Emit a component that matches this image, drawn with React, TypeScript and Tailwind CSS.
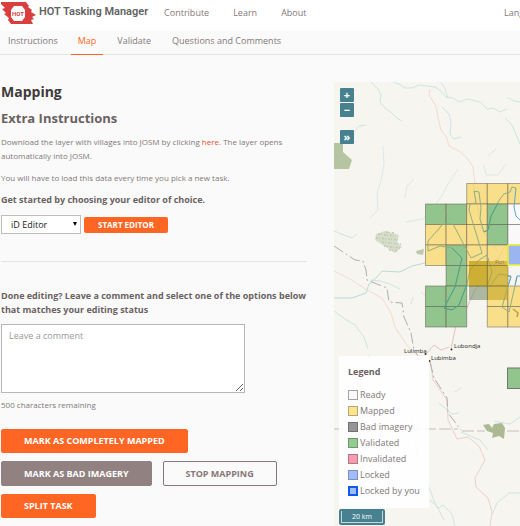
import React from "react";

type Status = "ready" | "mapped" | "validated" | "locked";

const fills: Record<Status, string> = {
  ready: "#f9f9f9",
  mapped: "#fadf8b",
  validated: "#92c48e",
  locked: "#9bb5f2",
};

const cells: [number, number, Status][] = [
  [2, 0, "mapped"], [3, 0, "mapped"], [4, 0, "mapped"],
  [0, 1, "validated"], [1, 1, "validated"], [2, 1, "mapped"], [3, 1, "validated"], [4, 1, "ready"],
  [0, 2, "mapped"], [1, 2, "mapped"], [2, 2, "mapped"], [3, 2, "validated"], [4, 2, "ready"],
  [0, 3, "mapped"], [1, 3, "validated"], [2, 3, "mapped"], [3, 3, "mapped"],
  [1, 4, "validated"], [2, 4, "mapped"], [3, 4, "mapped"],
  [0, 5, "validated"], [1, 5, "validated"], [3, 5, "mapped"], [4, 5, "mapped"],
  [0, 6, "validated"], [1, 6, "validated"], [3, 6, "mapped"], [4, 6, "mapped"],
];

const legend: [string, string][] = [
  ["Ready", "border border-[#a3a3a3] bg-[#f9f9f9]"],
  ["Mapped", "border border-[#b5a577] bg-[#ffe38e]"],
  ["Bad imagery", "border border-[#727272] bg-[#969696]"],
  ["Validated", "border border-[#71966f] bg-[#92cc90]"],
  ["Invalidated", "border border-[#b17585] bg-[#f99bb0]"],
  ["Locked", "border border-[#7d8fbd] bg-[#9fbcfb]"],
  ["Locked by you", "border-2 border-[#1158f0] bg-[#9fbcfb]"],
];

function Logo() {
  return (
    <svg viewBox="0 0 36 24" className="h-6 w-9 shrink-0" aria-hidden="true">
      <path d="M1 1 H26 L29 5 L28 6 L32 9 L31 11 L36 14 L32 16 L34 18 L31 19 L33 23 H11 L8 19 L9 17 L4 13 L6 12 L2 8 L5 7 L1 3Z" fill="#d93f3e" />
      <path d="M14 5 H22 L25 9 V16 L22 20 H14 L11 16 V9Z" fill="#fff" />
      <text x="18" y="15" textAnchor="middle" fontSize="6" fontWeight="700" fill="#d93f3e" fontFamily="Roboto, sans-serif">HOT</text>
    </svg>
  );
}

function TaskMap() {
  return (
    <svg viewBox="334 82 186 444" preserveAspectRatio="xMinYMin slice" className="absolute inset-0 h-full w-full" role="img" aria-label="Task map" fill="none">
      <rect x="334" y="82" width="186" height="444" fill="#f6f5f0" />
      <g stroke="#c9e2e0" strokeWidth="0.9">
        <path d="M371 82 L378 89 L381 95 L380 102 L385 108 L392 113 L397 118 L402 121" />
        <path d="M393 82 L399 84 L405 88 L412 88 L419 85 L427 86 L435 87 L441 91 L446 97 L453 98 L459 102 L468 99 L480 102 L487 109 L493 108 L500 112 L507 109" />
        <path d="M441 82 L445 89 L448 98 M442 107 L449 114 L451 123 L450 134 L454 139 L461 137" />
        <path d="M505 118 L512 125 L515 132 L520 144 M507 97 L514 101 L520 102" />
        <path d="M355 131 L359 126 L366 125" />
        <path d="M383 146 L384 164 L381 181 L377 193 L378 210 L370 218 M458 169 L448 184 L440 199 L431 208 L423 219 L406 222" opacity=".7" />
        <path d="M414 179 L407 186 L405 198 M496 149 L488 156 M484 165 L486 175 L498 175 L506 164" opacity=".7" />
        <path d="M334 231 L344 235 L352 238 L357 234" />
        <path d="M334 298 L352 298 L366 293 L369 284 L377 277 L382 271 L400 272 L412 266 L425 263" stroke="#afd8d5" />
        <path d="M370 280 L380 281 L390 284 L400 289 M334 311 L345 319 L355 325 L364 337 L368 349" />
        <path d="M377 373 L384 377 M368 355 L379 377 L397 396 L410 414 L414 433 L418 459 L429 487 L435 503 L444 520" />
        <path d="M439 403 L452 414 L459 413 M461 432 L480 440 L488 450 M520 493 L509 493 L497 503 L492 515" />
        <path d="M430 500 L439 508 L443 505 L452 514 L455 526 M455 392 L461 388 M494 421 L510 424 L520 417" />
      </g>
      <g stroke="#f2dccf" strokeWidth="1">
        <path d="M430 89 L429 95 L436 106 L438 118 L441 130 L447 138 L449 146 L459 151 L467 158 L473 167 L475 184 L480 210 L482 235 L498 258 L496 268" />
        <path d="M334 271 L350 279 L367 290 L382 298 L391 313 L395 327 L404 341 L413 354" />
        <path d="M431 364 L433 380 L447 400 L448 420 L457 439 L468 437 L479 446 L485 460 L475 478 L476 487 L488 498 L492 512 L490 526" stroke="#edd0ca" />
        <path d="M426 354 L434 345 L441 350 L449 347 M451 349 L456 325 L466 310 L475 290 L494 268" stroke="#eabfba" />
        <path d="M413 297 L411 304 M421 292 L426 296" />
      </g>
      <path d="M334 143 H343 V152 L352 160 L349 169 H334Z" fill="#b5c5a1" />
      <path d="M376 234 L385 231 L399 235 L397 242 L402 247 L395 253 L389 249 L381 244 L375 240Z" fill="#d8ddcb" />
      <path d="M378 234 L396 236 M376 238 L399 240 M382 242 L401 244 M384 246 L400 248 M389 250 L398 251 M386 232 L394 233" stroke="#c0cbae" strokeWidth="1.5" strokeDasharray="2 1 1 2" />
      <path d="M416 251 L424 249 L423 255 L417 254Z" fill="#bdc9aa" />
      <path d="M483 425 L489 424 L492 428 L494 424 L502 423 L505 428 L504 439 L499 436 L492 438 L493 433 L487 431Z" fill="#acba93" />
      <path d="M334 246 L355 260 L363 261 L366 270 L367 280 L387 288 L389 302 L402 303 L404 317 L411 333 L414 350 L418 356 M430 362 L434 378 L447 398 L448 413 L461 430" stroke="#b2adb1" strokeWidth="1" strokeDasharray="11 3 2 3" />
      <path d="M334 429 H458 M462 431 H485 M507 431 H520" stroke="#c8bdbb" strokeWidth="1" strokeDasharray="12 3" />

      <g>
        {cells.map(([column, row, status]) => (
          <rect key={`${column}-${row}`} x={425.5 + column * 20.6} y={183.5 + row * 20.5} width="20.6" height="20.5" fill={fills[status]} stroke="#4d4a40" strokeOpacity=".45" strokeWidth="1" />
        ))}
        <rect x="507.5" y="368" width="21" height="20.5" fill={fills.validated} stroke="#6b7969" />
      </g>
      <path d="M473 183 L477 204 L482 230 L498 252 M449 204 L437 235 M494 268 L505 245" stroke="#e6ad72" strokeWidth="1" opacity=".3" />
      <g stroke="#8fae80" strokeWidth="1">
        <path d="M474 191 L479 192 L481 208 L480 219 L484 232 L488 230 L491 216 L500 199 L504 194 L510 192 L512 187 L516 188" />
        <path d="M474 191 L476 203 L470 204 L469 210 L482 253 L471 258 L453 224 L443 224 L428 241 L428 251 L440 246 L452 248 L462 258 L455 287 L444 308 L452 310 L459 305 L467 284 L470 270 L479 260 L487 255 L492 272 L487 287 L490 286 L499 274 L511 276 L502 307 L509 312 L517 277" />
      </g>
      <path d="M484 232 L488 230 L491 216 L498 203 M452 248 L462 258 L455 287 L444 308 L452 310 L459 305 L467 284" stroke="#46a188" strokeWidth="1" />
      <path d="M516 188 L514 207 L516 216 L520 220 M507 276 L511 277 L508 286 M515 285 L517 276 H520" stroke="#5ba5cf" strokeWidth="1" />
      <path d="M469 261 H487.5 V286 H469Z" fill="#b99a12" opacity=".7" />
      <path d="M487.5 261 H508 V300 H487.5Z" fill="#bfa325" opacity=".6" />
      <path d="M469 286 H487.5 V300 H469Z" fill="#6f8560" opacity=".55" />
      <path d="M469 265.5 H508 M487.5 261 V300 M469 286 H508" stroke="#837638" opacity=".7" />
      <text x="495" y="264" fill="#9c8240" fontSize="6" fontFamily="Open Sans, sans-serif">Fizi</text>
      <path d="M513 309 L518 313 L517 317" stroke="#bca042" strokeWidth="1.5" />
      <rect x="508" y="245" width="21" height="20" fill={fills.locked} stroke="#edf428" strokeWidth="1.5" />

      <g fill="#333" fontFamily="Noto Sans, sans-serif" fontSize="6">
        <text x="404" y="353">Lulimba</text>
        <text x="431" y="360">Lubimba</text>
        <text x="454" y="348">Lubondja</text>
        <circle cx="425.5" cy="354" r="1" />
        <circle cx="429.5" cy="361" r="1" />
        <circle cx="451.5" cy="349.5" r="1" />
      </g>
    </svg>
  );
}

function Action({ children, tone = "orange" }: { children: React.ReactNode; tone?: "orange" | "gray" | "outline" }) {
  const tones = {
    orange: "h-6 border-[#ff6624] bg-[#ff6624] text-white",
    gray: "h-[25px] border-[#918181] bg-[#918181] text-white",
    outline: "h-[25px] border-[#877777] bg-[#fafafa] text-[#877777]",
  };
  return <button className={`rounded-[2px] border px-[22px] text-[9px] leading-5 font-bold ${tones[tone]}`}>{children}</button>;
}

const mapButton = "flex h-[14px] w-[14px] items-center justify-center rounded-[1px] bg-[#478190] text-[11px] leading-3 font-bold text-white";

export default function App() {
  return (
    <div className="flex min-h-screen flex-col overflow-hidden bg-[#fafafa] font-['Open_Sans',sans-serif] text-[#6a6262]">
      <header className="flex h-[31px] items-start bg-white">
        <a href="#home" className="flex h-[25px] shrink-0 items-center gap-[3px] font-['Roboto',sans-serif] text-[11px] font-semibold text-[#626262]">
          <Logo />
          <span className="whitespace-nowrap">HOT Tasking Manager</span>
        </a>
        <nav className="ml-4 flex h-[25px] flex-1 items-center gap-6 text-[9px] text-[#827979]">
          <a href="#contribute">Contribute</a>
          <a href="#learn">Learn</a>
          <a href="#about">About</a>
        </nav>
        <button className="h-[25px] w-4 shrink-0 overflow-hidden text-left text-[9px] whitespace-nowrap text-[#827979]">Language</button>
      </header>
      <nav className="flex h-6 border-b border-[#e3e3e3] pl-2 text-[9px] leading-5 text-[#827979]">
        <a href="#instructions">Instructions</a>
        <a href="#map" className="ml-[13px] h-6 border-b border-[#ff6624] px-[7px] text-[#ff6624]">Map</a>
        <a href="#validate" className="ml-[14px]">Validate</a>
        <a href="#questions" className="ml-[21px]">Questions and Comments</a>
      </nav>

      <main className="flex flex-1 gap-[27px] pt-[27px]">
        <section className="w-[307px] shrink-0 pl-px">
          <h1 className="text-[14px] leading-5 font-bold text-[#403b3b]">Mapping</h1>
          <h2 className="mt-[6px] text-[13px] leading-5 font-bold">Extra Instructions</h2>
          <p className="mt-[7px] text-[8px] leading-[14px] text-[#827979]">
            Download the layer with villages into JOSM by clicking <a href="#layer" className="text-[#f04a2c]">here</a>. The layer opens automatically into JOSM.
          </p>
          <p className="mt-2 text-[8px] leading-[14px] text-[#827979]">You will have to load this data every time you pick a new task.</p>
          <h3 className="mt-2 text-[9px] leading-[14px] font-bold"><label htmlFor="editor">Get started by choosing your editor of choice.</label></h3>
          <div className="mt-2 flex items-center gap-[3px]">
            <div className="relative">
              <select id="editor" className="block h-[19px] w-20 appearance-none border border-[#c2bdbd] bg-white pl-[9px] text-[9px] leading-4 text-[#222]">
                <option>iD Editor</option>
                <option>JOSM</option>
              </select>
              <span className="pointer-events-none absolute top-[7px] right-1 border-x-[2px] border-t-[4px] border-x-transparent border-t-black" />
            </div>
            <button className="h-4 w-[84px] rounded-[2px] bg-[#ff6624] text-[8px] leading-4 font-bold text-white">START EDITOR</button>
          </div>
          <hr className="mt-[27px] border-[#e3e3e3]" />
          <h3 className="mt-[27px] text-[9px] leading-[14px] font-bold"><label htmlFor="comment">Done editing? Leave a comment and select one of the options below that matches your editing status</label></h3>
          <textarea id="comment" placeholder="Leave a comment" className="mt-[7px] block h-[69px] w-[244px] resize border border-[#bcb5b5] bg-white px-[7px] py-1 text-[9px] leading-[14px] placeholder:text-[#999]" />
          <p className="mt-[5px] text-[8px] leading-[14px] text-[#827979]">500 characters remaining</p>
          <div className="mt-[17px] flex flex-col items-start gap-2">
            <Action>MARK AS COMPLETELY MAPPED</Action>
            <div className="flex gap-[11px]">
              <Action tone="gray">MARK AS BAD IMAGERY</Action>
              <Action tone="outline">STOP MAPPING</Action>
            </div>
            <Action>SPLIT TASK</Action>
          </div>
        </section>

        <section className="relative min-w-0 flex-1 overflow-hidden" aria-label="Map">
          <TaskMap />
          <div className="absolute top-[6px] left-[6px] flex flex-col gap-px">
            <button className={mapButton} aria-label="Zoom in">+</button>
            <button className={mapButton} aria-label="Zoom out">−</button>
            <button className={`mt-3 ${mapButton}`} aria-label="Show layers">»</button>
          </div>
          <aside className="absolute bottom-[18px] left-[5px] h-[152px] w-[90px] rounded-[2px] bg-white/90 px-[9px] pt-[9px]">
            <h2 className="text-[9px] leading-[14px] font-bold">Legend</h2>
            <ul className="mt-2 text-[9px] leading-4 text-[#827979]">
              {legend.map(([label, swatch]) => (
                <li key={label} className="flex items-center gap-[2px] whitespace-nowrap">
                  <span className={`h-[10px] w-[10px] shrink-0 ${swatch}`} />
                  {label}
                </li>
              ))}
            </ul>
          </aside>
          <div className="absolute bottom-px left-[5px] w-[46px] rounded-[2px] bg-[#478190] p-[2px]">
            <div className="border border-t-0 border-[#c5d8dc] text-center text-[7px] leading-[11px] text-white">20 km</div>
          </div>
        </section>
      </main>
    </div>
  );
}
